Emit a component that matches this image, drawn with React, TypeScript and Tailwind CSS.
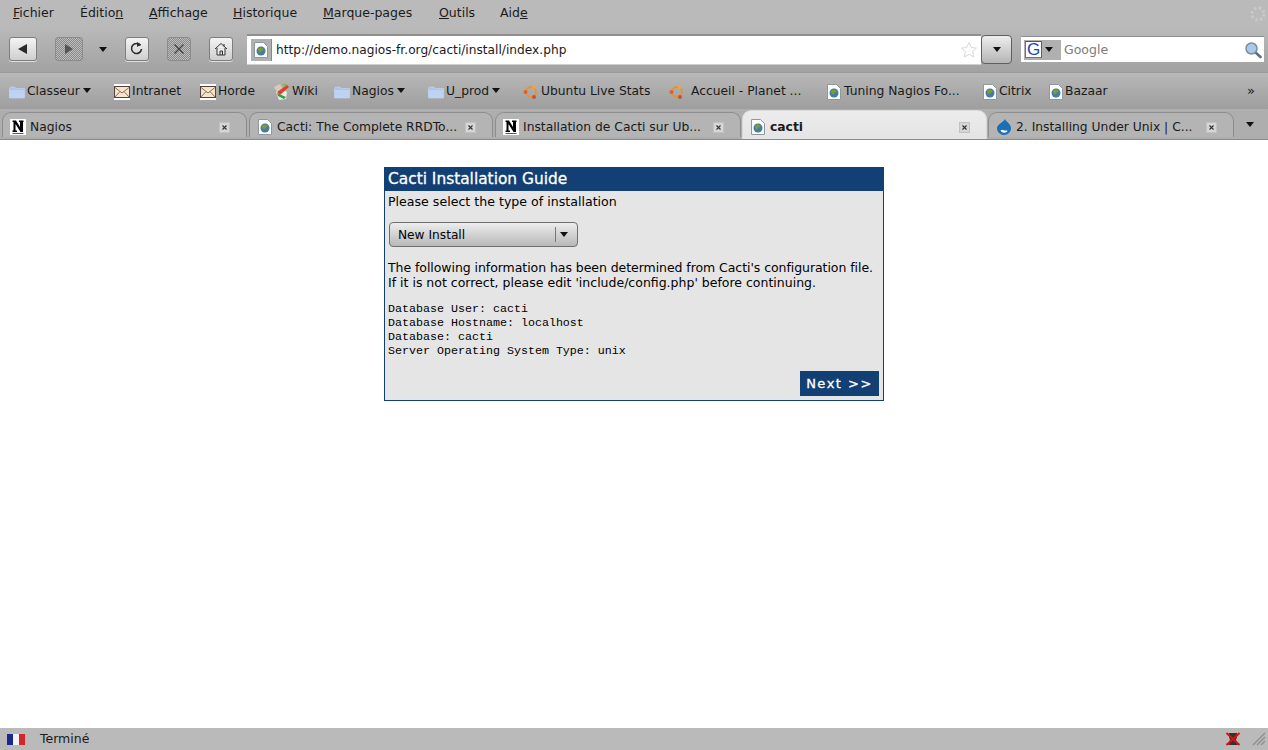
import type { ReactElement } from "react";

const menus = [
  { before: "", key: "F", after: "ichier", w: "w-[67px]" },
  { before: "Éditio", key: "n", after: "", w: "w-[69px]" },
  { before: "", key: "A", after: "ffichage", w: "w-[84px]" },
  { before: "", key: "H", after: "istorique", w: "w-[90px]" },
  { before: "", key: "M", after: "arque-pages", w: "w-[116px]" },
  { before: "", key: "O", after: "utils", w: "w-[61px]" },
  { before: "Aid", key: "e", after: "", w: "w-[40px]" },
];

function PageIcon() {
  return (
    <svg width="16" height="16" viewBox="0 0 16 16" className="shrink-0">
      <path d="M1.500.500h9l4 4v11h-13z" fill="#fbfcfc" stroke="#8d999e" />
      <circle cx="8" cy="9" r="4.500" fill="#4a7a9e" />
      <path d="M5.500 6c2.200-1.200 4.500-.2 5 1.500-1 1.500-2 .5-2.500 2.200-.5 1-2 .5-2.700-1-.3-1 0-2 .2-2.700z" fill="#7a9c3a" />
    </svg>
  );
}

function FolderIcon() {
  return (
    <svg width="16" height="16" viewBox="0 0 16 16" className="shrink-0">
      <path d="M.5 4.500 1.500 3h4.500l1 1.500h8.500v9.500h-15z" fill="#a9c5ec" stroke="#c6d8f2" strokeWidth=".6" />
      <path d="M.5 6h15v8h-15z" fill="#bcd3f4" />
    </svg>
  );
}

function MailIcon() {
  return (
    <svg width="16" height="16" viewBox="0 0 16 16" className="shrink-0">
      <rect x="0" y="0" width="16" height="16" fill="#fff" />
      <rect x=".5" y="2.500" width="15" height="11" fill="#f6e4cc" stroke="#54443a" />
      <path d="M1 3.500l7 5.500 7-5.500M1 13l5-5.500M15 13l-5-5.500" fill="none" stroke="#8a6f58" />
    </svg>
  );
}

function WikiIcon() {
  return (
    <svg width="16" height="16" viewBox="0 0 16 16" className="shrink-0">
      <path d="M0 3 6 0l3 5-6 3z" fill="#d9c9b8" />
      <path d="M2 8l6-3 5 3-1 7-7 1z" fill="#e8f2e4" />
      <path d="M3 9l9 4-2 2-6-3z" fill="#2f9e44" />
      <path d="M3 8 13 1l2 2L6 11z" fill="#d8432f" />
      <path d="M8 0l5 0-2 3z" fill="#8fb339" />
    </svg>
  );
}

function UbuntuIcon() {
  return (
    <svg width="16" height="16" viewBox="0 0 16 16" className="shrink-0">
      <circle cx="8" cy="8" r="5" fill="none" stroke="#e8903a" strokeWidth="2" />
      <circle cx="2.500" cy="8" r="2" fill="#d9622b" />
      <circle cx="11" cy="3" r="2" fill="#eba83c" />
      <circle cx="11" cy="13" r="2" fill="#c9552a" />
    </svg>
  );
}

function NagiosIcon() {
  return (
    <svg width="16" height="16" viewBox="0 0 16 16" className="shrink-0">
      <rect width="16" height="16" fill="#fff" />
      <path d="M2.500 1.500h3.500l4 6.500v-5H9v-1.500h4.500V3H13v10h-2.500L5.500 5v6.500H7V13H2.500v-1.500H3.500V3h-1z" fill="#000" />
      <rect x="2.500" y="14" width="11" height="1" fill="#555" />
    </svg>
  );
}

function DrupalIcon() {
  return (
    <svg width="16" height="16" viewBox="0 0 16 16" className="shrink-0">
      <path d="M9 0c.5 2.500 6 4.500 6 9.500a7 6.500 0 0 1-14 0c0-4.500 6-5.500 8-9.500z" fill="#1a6fb5" />
      <path d="M4.500 11.500c1.500-1.500 3-.5 3.700 0 .8.500 2.500-.5 3.300.5-1 2-5.500 2.500-7-.5z" fill="#fff" />
    </svg>
  );
}

function Arrow({ className = "" }: { className?: string }) {
  return (
    <svg width="8" height="5" viewBox="0 0 8 5" className={`shrink-0 ${className}`}>
      <path d="M0 0h8L4 5z" fill="#111" />
    </svg>
  );
}

function NavButton({ w, disabled, children }: { w: string; disabled?: boolean; children: ReactElement }) {
  return (
    <div
      className={`${w} h-[24px] flex items-center justify-center rounded-[3px] border shrink-0 ${
        disabled
          ? "border-[#8c8c8c] bg-[repeating-conic-gradient(#8a8a8a_0%_25%,#bdbdbd_0%_50%)] bg-[length:2px_2px]"
          : "border-[#7e7e7e] bg-gradient-to-b from-[#f4f4f4] to-[#cfcfcf] shadow-[0_1px_0_#e0e0e0]"
      }`}
    >
      {children}
    </div>
  );
}

function Bookmark({
  w,
  icon,
  label,
  arrow,
  gap = "ml-[2px]",
}: {
  w: string;
  icon: ReactElement;
  label: string;
  arrow?: boolean;
  gap?: string;
}) {
  return (
    <div className={`${w} flex items-center shrink-0`}>
      {icon}
      <span className={`${gap} whitespace-nowrap`}>{label}</span>
      {arrow && <Arrow className="ml-[3px] -mt-[3px]" />}
    </div>
  );
}

function CloseBox() {
  return (
    <div className="w-[11px] h-[11px] shrink-0 flex items-center justify-center bg-[#d6d6d6] border border-[#c2c2c2]">
      <svg width="5" height="5" viewBox="0 0 5 5">
        <path d="M.5.500l4 4M4.500.500l-4 4" stroke="#333" strokeWidth="1.100" />
      </svg>
    </div>
  );
}

function Tab({ w, icon, label, active }: { w: string; icon: ReactElement; label: string; active?: boolean }) {
  return (
    <div
      className={`${w} shrink-0 flex items-center pl-[7px] pr-[16px] pt-[4px] rounded-t-[9px] border-x border-t ${
        active
          ? "h-[29px] border-[#d8d8d8] bg-gradient-to-b from-[#ececec] to-[#e4e4e4] font-bold text-[12.3px]"
          : "h-[25px] mb-[2px] border-[#8d8d8d] bg-[#b4b4b4]"
      }`}
    >
      {icon}
      <span className="ml-[4px] whitespace-nowrap flex-1 min-w-0">{label}</span>
      <CloseBox />
    </div>
  );
}

export default function App(): ReactElement {
  return (
    <div className="h-screen overflow-hidden flex flex-col bg-white text-[12.5px] text-[#1a1a1a] font-['DejaVu_Sans',sans-serif]">
      {/* Barre de menus */}
      <div className="h-[26px] shrink-0 flex items-center pl-[13px] bg-[#bababa] relative">
        {menus.map((m) => (
          <div key={m.key + m.after} className={`${m.w} shrink-0`}>
            {m.before}
            <span className="underline">{m.key}</span>
            {m.after}
          </div>
        ))}
        <svg width="16" height="16" viewBox="0 0 16 16" className="absolute right-[2px] top-[6px]">
          <circle cx="8" cy="8" r="6" fill="none" stroke="#c9c9c9" strokeWidth="3" strokeDasharray="2.500 2.200" />
        </svg>
      </div>

      {/* Navigation */}
      <div className="h-[47px] shrink-0 flex items-center pl-[9px] bg-gradient-to-b from-[#bababa] to-[#a2a2a2] border-b border-[#9a9a9a]">
        <NavButton w="w-[28px]">
          <svg width="12" height="12" viewBox="0 0 12 12">
            <path d="M10 1v10L1 6z" fill="#2b2b2b" />
          </svg>
        </NavButton>
        <div className="ml-[18px]">
          <NavButton w="w-[28px]" disabled>
            <svg width="10" height="10" viewBox="0 0 10 10">
              <path d="M1 0v10l8-5z" fill="#555" />
            </svg>
          </NavButton>
        </div>
        <Arrow className="ml-[16px]" />
        <div className="ml-[18px]">
          <NavButton w="w-[24px]">
            <svg width="14" height="14" viewBox="0 0 14 14">
              <path d="M10.500 3.500a5 5 0 1 0 1 3.500" fill="none" stroke="#2b2b2b" strokeWidth="1.600" />
              <path d="M7 0v5l4-2.500z" fill="#2b2b2b" />
            </svg>
          </NavButton>
        </div>
        <div className="ml-[18px]">
          <NavButton w="w-[24px]" disabled>
            <svg width="12" height="12" viewBox="0 0 12 12">
              <path d="M1.500 1.500l9 9M10.500 1.500l-9 9" stroke="#444" strokeWidth="1.300" />
            </svg>
          </NavButton>
        </div>
        <div className="ml-[18px]">
          <NavButton w="w-[24px]">
            <svg width="14" height="14" viewBox="0 0 14 14">
              <path d="M1 7 7 1.500 13 7M3 6v7h8V6M6 13V9h2.500v4M10 2v2.500" fill="#eee" stroke="#333" />
            </svg>
          </NavButton>
        </div>
        {/* Adresse */}
        <div className="ml-[14px] w-[734px] h-[31px] flex items-center bg-white border-t-2 border-[#8f8f8f] border-b border-b-[#d0d0d0] pl-[4px] shrink-0 pr-[3px]">
          <div className="w-[21px] h-[22px] bg-[#b0b0b0] border-r border-[#888] flex items-center justify-center shrink-0">
            <PageIcon />
          </div>
          <span className="ml-[4px] pt-[2px] flex-1 text-[12.2px]">http://demo.nagios-fr.org/cacti/install/index.php</span>
          <svg width="18" height="18" viewBox="0 0 18 18">
            <path d="M9 1.500l2.300 5 5.200.6-3.900 3.500 1.100 5.400L9 13.300 4.300 16l1.100-5.400L1.500 7.100l5.200-.6z" fill="#fff" stroke="#d8d8d8" />
          </svg>
        </div>
        <div className="w-[31px] h-[29px] rounded-[4px] border border-[#5f5f5f] bg-gradient-to-b from-[#eeeeee] to-[#b5b5b5] flex items-center justify-center shrink-0">
          <Arrow />
        </div>
        {/* Recherche */}
        <div className="ml-[9px] w-[243px] h-[26px] flex items-center bg-white border-t border-[#8f8f8f] pl-[3px] shrink-0">
          <div className="w-[37px] h-[20px] bg-[#b0b0b0] flex items-center pl-[1px] shrink-0">
            <div className="w-[17px] h-[17px] bg-white border border-[#3a9a4a] border-t-[#2a56c6] border-r-[#d03030] flex items-center justify-center text-[17px] leading-none text-[#1c3fc4] font-['Liberation_Sans',sans-serif]">
              G
            </div>
            <Arrow className="ml-[3px]" />
          </div>
          <span className="ml-[3px] pt-[2px] flex-1 text-[#7b7b7b]">Google</span>
          <svg width="18" height="18" viewBox="0 0 18 18" className="mr-[2px]">
            <path d="M11 11l5.500 5" stroke="#5c6f80" strokeWidth="2.600" strokeLinecap="round" />
            <circle cx="7.500" cy="7.500" r="5.500" fill="#a9c9ec" stroke="#7c8c9a" strokeWidth="1.500" />
          </svg>
        </div>
      </div>

      {/* Marque-pages */}
      <div className="h-[36px] shrink-0 flex items-center pl-[9px] pt-[1px] bg-gradient-to-b from-[#b8b8b8] to-[#9e9e9e] text-[12.3px]">
        <Bookmark w="w-[105px]" icon={<FolderIcon />} label="Classeur" arrow />
        <Bookmark w="w-[86px]" icon={<MailIcon />} label="Intranet" />
        <Bookmark w="w-[74px]" icon={<MailIcon />} label="Horde" />
        <Bookmark w="w-[60px]" icon={<WikiIcon />} label="Wiki" />
        <Bookmark w="w-[94px]" icon={<FolderIcon />} label="Nagios" arrow />
        <Bookmark w="w-[95px]" icon={<FolderIcon />} label="U_prod" arrow />
        <Bookmark w="w-[146px]" icon={<UbuntuIcon />} label="Ubuntu Live Stats" />
        <Bookmark w="w-[157px]" icon={<UbuntuIcon />} label="Accueil - Planet ..." gap="ml-[6px]" />
        <Bookmark w="w-[156px]" icon={<PageIcon />} label="Tuning Nagios Fo..." />
        <Bookmark w="w-[66px]" icon={<PageIcon />} label="Citrix" gap="ml-[1px]" />
        <Bookmark w="w-[199px]" icon={<PageIcon />} label="Bazaar" gap="ml-[1px]" />
        <span className="text-[13px] -mt-[1px]">»</span>
      </div>

      {/* Onglets */}
      <div className="h-[31px] shrink-0 flex items-end pl-[2px] bg-[#aeaeae] border-b border-[#8a8a8a] text-[12.3px]">
        <Tab w="w-[245px]" icon={<NagiosIcon />} label="Nagios" />
        <div className="w-[2px] shrink-0" />
        <Tab w="w-[244px]" icon={<PageIcon />} label="Cacti: The Complete RRDTo..." />
        <div className="w-[2px] shrink-0" />
        <Tab w="w-[246px]" icon={<NagiosIcon />} label="Installation de Cacti sur Ub..." />
        <div className="w-[1px] shrink-0" />
        <Tab w="w-[245px]" icon={<PageIcon />} label="cacti" active />
        <div className="w-[1px] shrink-0" />
        <Tab w="w-[246px]" icon={<DrupalIcon />} label="2. Installing Under Unix | C..." />
        <Arrow className="ml-[12px] mb-[12px]" />
      </div>

      {/* Contenu */}
      <main className="flex-1 bg-white">
        <div className="mx-auto mt-[27px] w-[500px] h-[234px] flex flex-col border border-[#123f74] bg-[#e5e5e5] text-[#000]">
          <div className="h-[23px] shrink-0 bg-[#123f74] text-white text-[15.4px] [-webkit-text-stroke:0.3px_white] pl-[3px] flex items-center">
            Cacti Installation Guide
          </div>
          <p className="pl-[3px] mt-[2px] leading-[17px] text-[12.6px]">Please select the type of installation</p>
          <div className="ml-[4px] mt-[12px] w-[189px] h-[25px] flex items-center rounded-[4px] border border-[#6f6f6f] bg-gradient-to-b from-[#ededed] to-[#b8b8b8] pl-[8px] shrink-0">
            <span className="w-[157px] pt-[1px] text-[12.2px]">New Install</span>
            <div className="h-[15px] border-l border-[#777] pl-[4px] flex items-center">
              <Arrow />
            </div>
          </div>
          <p className="pl-[3px] mt-[13px] leading-[15px] whitespace-nowrap">
            <span className="tracking-[-0.06px]">The following information has been determined from Cacti's configuration file.</span>
            <br />
            If it is not correct, please edit 'include/config.php' before continuing.
          </p>
          <pre className="pl-[3px] mt-[12px] text-[11.67px] leading-[14px] font-['Liberation_Mono',monospace]">
            {"Database User: cacti\nDatabase Hostname: localhost\nDatabase: cacti\nServer Operating System Type: unix"}
          </pre>
          <div className="mt-auto mb-[4px] mr-[4px] self-end w-[79px] h-[25px] bg-[#123f74] text-white text-[13px] [-webkit-text-stroke:0.3px_white] tracking-[1.5px] flex items-center justify-center">
            Next &gt;&gt;
          </div>
        </div>
      </main>

      {/* Barre d'état */}
      <div className="h-[22px] shrink-0 flex items-center bg-[#bababa] pl-[7px] pr-[2px]">
        <div className="w-[18px] h-[11px] flex shrink-0">
          <div className="w-[6px] bg-[#1a2a8c]" />
          <div className="w-[6px] bg-[#f4f4f4]" />
          <div className="w-[6px] bg-[#d6242c]" />
        </div>
        <span className="ml-[15px] flex-1">Terminé</span>
        <svg width="16" height="16" viewBox="0 0 16 16">
          <path d="M4 2h8v4l-1 3 2 5H3l2-5-1-3z" fill="#333" />
          <path d="M1.500 2l13 12M14.500 2l-13 12" stroke="#e01010" strokeWidth="2" />
        </svg>
        <svg width="14" height="14" viewBox="0 0 14 14" className="ml-[11px]">
          <path d="M1 13 13 1M5 13l8-8M9 13l4-4" stroke="#8c8c8c" strokeWidth="1.200" />
        </svg>
      </div>
    </div>
  );
}
